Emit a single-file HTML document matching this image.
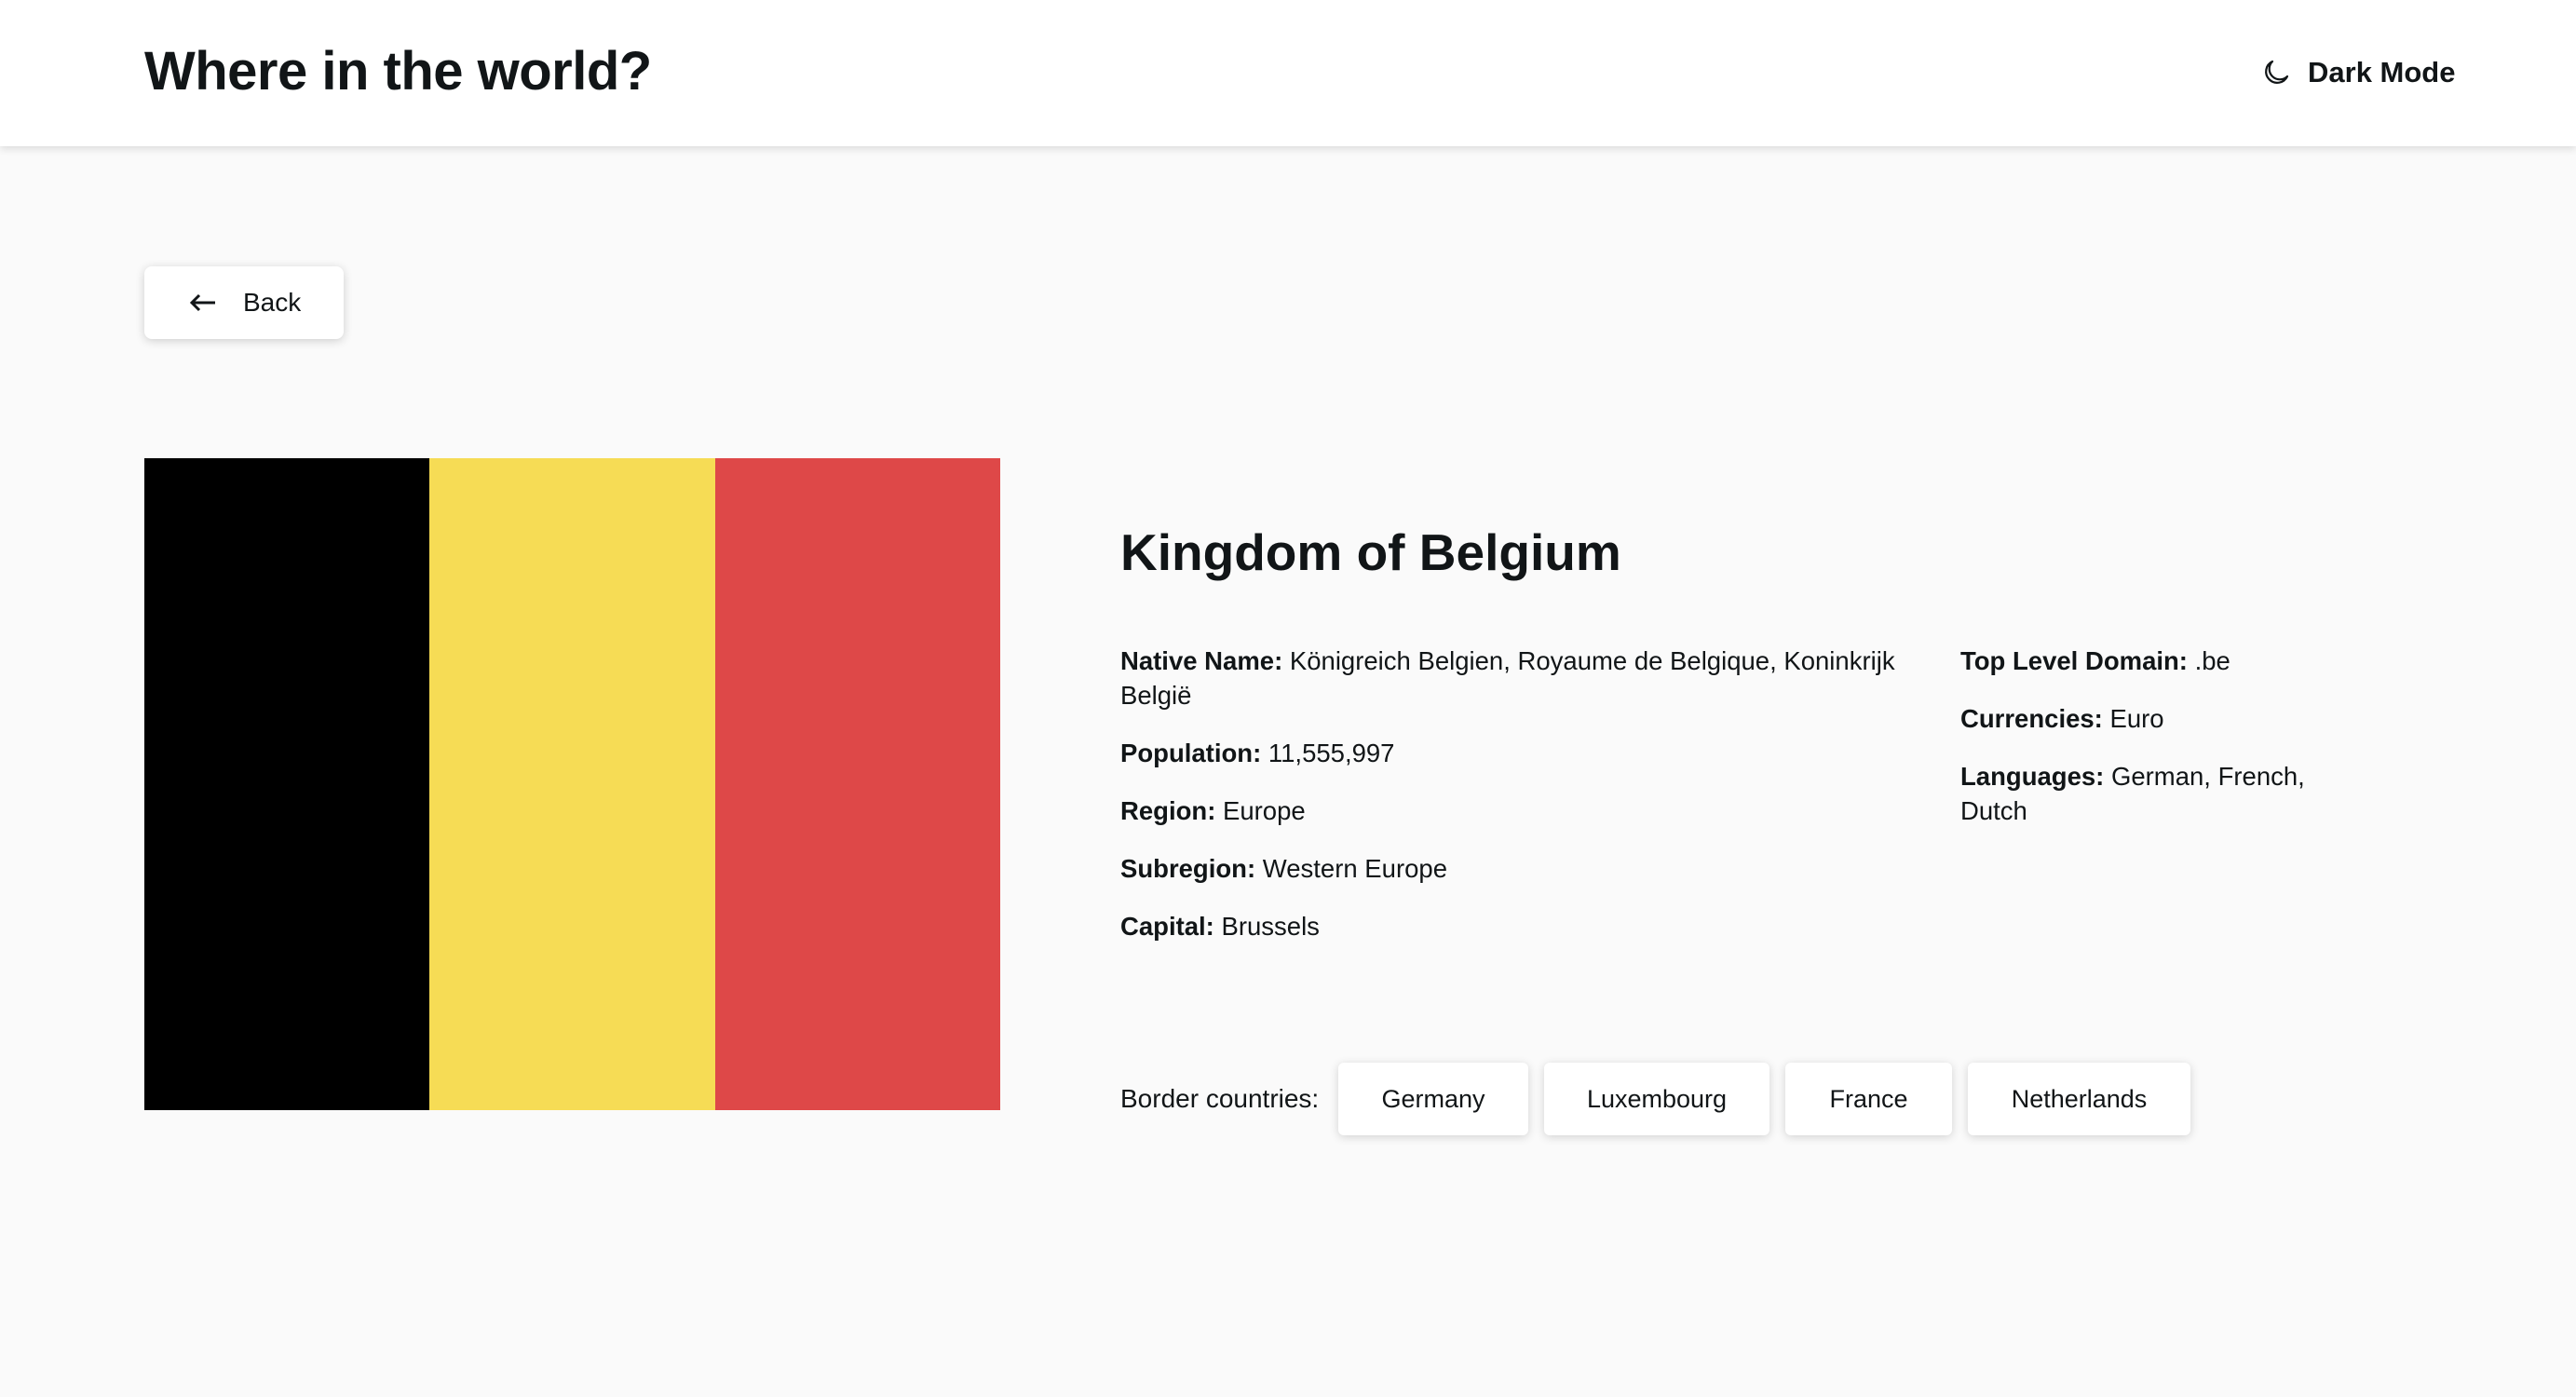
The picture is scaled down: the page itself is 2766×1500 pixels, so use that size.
<!DOCTYPE html>
<html><head><meta charset="utf-8"><style>
*{margin:0;padding:0;box-sizing:border-box}
body{width:2766px;height:1500px;background:#fafafa;font-family:"Liberation Sans",Arial,sans-serif;color:#111517;position:relative;overflow:hidden}
.hdr{position:absolute;left:0;top:0;width:2766px;height:157px;background:#fff;box-shadow:0 3px 8px rgba(0,0,0,.12)}
.title{position:absolute;left:155px;top:43px;font-size:58px;font-weight:bold;letter-spacing:-0.5px}
.dm{position:absolute;left:2428px;top:60px;font-size:31px;font-weight:bold;display:flex;align-items:center}
.dm svg{margin-right:18px}
.back{position:absolute;left:155px;top:286px;width:214px;height:78px;background:#fff;border-radius:8px;box-shadow:0 2px 10px rgba(0,0,0,.18);font-size:28px;display:flex;align-items:center}
.back svg{margin-left:48px;margin-right:28px}
.flag{position:absolute;left:155px;top:492px;width:919px;height:700px;display:flex}
.flag div{flex:1}
h1{position:absolute;left:1203px;top:561px;font-size:55px;font-weight:bold}
.col{position:absolute;font-size:27.5px;line-height:37px}
.col p{margin-bottom:25px}
b{font-weight:bold}
.bl{position:absolute;left:1203px;top:1164px;font-size:28px}
.btn{position:absolute;top:1141px;height:78px;background:#fff;border-radius:6px;box-shadow:0 2px 10px rgba(0,0,0,.16);font-size:27px;display:flex;align-items:center;justify-content:center}
</style></head><body>
<div class="hdr">
<div class="title">Where in the world?</div>
<div class="dm"><svg width="32" height="32" viewBox="0 0 32 32"><path d="M12 4 A12 12 0 1 0 28 20 A10 10 0 0 1 12 4 Z" fill="none" stroke="#111517" stroke-width="2.2" stroke-linejoin="round"/></svg>Dark Mode</div>
</div>
<div class="back"><svg width="30" height="22" viewBox="0 0 30 22"><path d="M28 11H3M11 3L3 11L11 19" fill="none" stroke="#111517" stroke-width="3"/></svg>Back</div>
<div class="flag"><div style="background:#000"></div><div style="background:#f6dc55"></div><div style="background:#de4848"></div></div>
<h1>Kingdom of Belgium</h1>
<div class="col" style="left:1203px;top:691px"><p><b>Native Name:</b> Königreich Belgien, Royaume de Belgique, Koninkrijk<br>België</p><p><b>Population:</b> 11,555,997</p><p><b>Region:</b> Europe</p><p><b>Subregion:</b> Western Europe</p><p><b>Capital:</b> Brussels</p></div>
<div class="col" style="left:2105px;top:691px"><p><b>Top Level Domain:</b> .be</p><p><b>Currencies:</b> Euro</p><p><b>Languages:</b> German, French,<br>Dutch</p></div>
<div class="bl">Border countries:</div>
<div class="btn" style="left:1437px;width:204px">Germany</div>
<div class="btn" style="left:1658px;width:242px">Luxembourg</div>
<div class="btn" style="left:1917px;width:179px">France</div>
<div class="btn" style="left:2113px;width:239px">Netherlands</div>
</body></html>
